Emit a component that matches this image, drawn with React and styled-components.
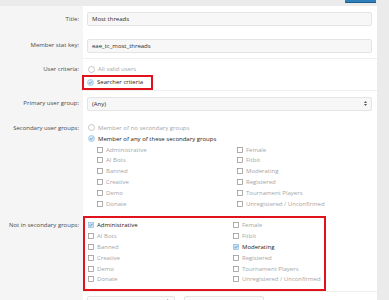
import React from "react";
import styled, { createGlobalStyle, css } from "styled-components";

const GlobalStyle = createGlobalStyle`
  html, body {
    margin: 0;
    padding: 0;
    background: #ebebeb;
    font-family: "Open Sans", "Noto Sans", sans-serif;
    font-size: 6px;
    overflow: hidden;
  }
`;

const Page = styled.div`
  width: 377px;
  height: 300px;
  overflow: hidden;
`;

const TopBar = styled.div`
  height: 6px;
  display: flex;
  justify-content: flex-end;
  align-items: flex-start;
`;

const TopButton = styled.div`
  width: 31px;
  height: 2px;
  background: #2f7fba;
  border-bottom: 1px solid #1d5f91;
  margin-right: 1px;
`;

const Card = styled.div`
  background: #fff;
  display: flex;
  flex-direction: column;
`;

const Row = styled.div`
  display: grid;
  grid-template-columns: 83px 1fr;
`;

const Label = styled.div`
  background: #f5f5f5;
  color: #4a4a4a;
  text-align: right;
  padding-right: 4px;
  line-height: 10.8px;
  display: flex;
  justify-content: flex-end;
  align-items: ${(p) => (p.$top ? "flex-start" : "center")};
  padding-top: ${(p) => p.$pt || 0}px;
`;

const Content = styled.div`
  padding: ${(p) => p.$pad || "6px 5px 6px 4px"};
  ${(p) =>
    p.$sep &&
    css`
      border-top: 1px solid #eeeeee;
    `}
  ${(p) =>
    p.$sepBottom &&
    css`
      border-bottom: 1px solid #eeeeee;
    `}
`;

const Input = styled.div`
  height: 14px;
  box-sizing: border-box;
  background: #f7f7f7;
  border: 1px solid #e4e4e4;
  border-radius: 2px;
  color: #2b2b2b;
  display: flex;
  align-items: center;
  justify-content: space-between;
  padding: 0 4px;
`;

const Arrows = styled.svg`
  width: 3px;
  height: 5px;
`;

const Option = styled.div`
  display: flex;
  align-items: center;
  height: 10.8px;
  color: ${(p) => (p.$on ? "#222" : "#a6a6a6")};
  gap: 3px;
`;

const Highlight = styled.div`
  border: 2px solid #e0121b;
  margin-left: ${(p) => p.$ml || -6}px;
  padding: ${(p) => p.$pad || "0 3px"};
  width: ${(p) => p.$w}px;
  box-sizing: border-box;
`;

const CheckGrid = styled.div`
  display: grid;
  grid-template-columns: ${(p) => p.$col}px 1fr;
  grid-auto-flow: column;
  grid-template-rows: repeat(6, 10.8px);
  margin-left: ${(p) => p.$ml || 0}px;
`;

const Footer = styled.div`
  display: flex;
  gap: 9px;
  padding-top: 4px;
`;

const SmallBox = styled.div`
  width: ${(p) => p.$w}px;
  height: 12px;
  border: 1px solid #e4e4e4;
  border-radius: 2px;
  background: #fafafa;
  box-sizing: border-box;
  display: flex;
  justify-content: flex-end;
  align-items: center;
  padding-right: 5px;
`;

function Radio({ on }) {
  return (
    <svg width="7" height="7" viewBox="0 0 7 7">
      <circle
        cx="3.5"
        cy="3.5"
        r="3"
        fill={on ? "#d7e8f6" : "#fff"}
        stroke={on ? "#9cc4e4" : "#b8b8b8"}
        strokeWidth="0.8"
      />
      {on && (
        <path d="M2 3.6 L3.1 4.6 L5 2.5" fill="none" stroke="#3f88c5" strokeWidth="0.8" />
      )}
    </svg>
  );
}

function Box({ on }) {
  return (
    <svg width="6" height="6" viewBox="0 0 6 6">
      <rect
        x="0.5"
        y="0.5"
        width="5"
        height="5"
        fill={on ? "#cfe3f4" : "#fff"}
        stroke={on ? "#8fbde3" : "#8a8a8a"}
        strokeWidth="0.7"
      />
      {on && (
        <path d="M1.4 3 L2.5 4.1 L4.6 1.8" fill="none" stroke="#3b82c1" strokeWidth="0.8" />
      )}
    </svg>
  );
}

const groups = [
  "Administrative",
  "AI Bots",
  "Banned",
  "Creative",
  "Demo",
  "Donate",
  "Female",
  "Fitbit",
  "Moderating",
  "Registered",
  "Tournament Players",
  "Unregistered / Unconfirmed",
];

export default function App() {
  const excluded = ["Administrative", "Moderating"];
  return (
    <Page>
      <GlobalStyle />
      <TopBar>
        <TopButton />
      </TopBar>
      <Card>
        <Row>
          <Label>Title:</Label>
          <Content $pad="6px 5px 6px 4px">
            <Input>Most threads</Input>
          </Content>
        </Row>
        <Row>
          <Label>Member stat key:</Label>
          <Content $pad="7px 5px 5px 4px">
            <Input>eae_tc_most_threads</Input>
          </Content>
        </Row>
        <Row>
          <Label $top $pt={6}>User criteria:</Label>
          <Content $sep $pad="5px 5px 0 5px">
            <Option>
              <Radio />
              All valid users
            </Option>
            <Highlight $w={71} $pad="0 0 0 3px">
              <Option $on>
                <Radio on />
                Searcher criteria
              </Option>
            </Highlight>
          </Content>
        </Row>
        <Row>
          <Label>Primary user group:</Label>
          <Content $sep $pad="6px 5px 6px 4px">
            <Input>
              (Any)
              <Arrows viewBox="0 0 3 5">
                <path d="M0 2 L1.5 0 L3 2 Z M0 3 L1.5 5 L3 3 Z" fill="#555" />
              </Arrows>
            </Input>
          </Content>
        </Row>
        <Row>
          <Label $top $pt={6}>Secondary user groups:</Label>
          <Content $pad="6px 5px 3px 5px">
            <Option>
              <Radio />
              Member of no secondary groups
            </Option>
            <Option $on>
              <Radio on />
              Member of any of these secondary groups
            </Option>
            <CheckGrid $col={140} $ml={9}>
              {groups.map((g) => (
                <Option key={g}>
                  <Box />
                  {g}
                </Option>
              ))}
            </CheckGrid>
          </Content>
        </Row>
        <Row>
          <Label $top $pt={8}>Not in secondary groups:</Label>
          <Content $pad="4px 5px 0 5px" $sepBottom>
            <Highlight $w={243} $pad="2px 0 4px 3px" $ml={-5}>
              <CheckGrid $col={145}>
                {groups.map((g) => {
                  const on = excluded.includes(g);
                  return (
                    <Option key={g} $on={on}>
                      <Box on={on} />
                      {g}
                    </Option>
                  );
                })}
              </CheckGrid>
            </Highlight>
          </Content>
        </Row>
        <Row>
          <Label />
          <Content $pad="0 5px 0 4px">
            <Footer>
              <SmallBox $w={88}>
                <Arrows viewBox="0 0 3 5">
                  <path d="M0 2 L1.5 0 L3 2 Z M0 3 L1.5 5 L3 3 Z" fill="#999" />
                </Arrows>
              </SmallBox>
              <SmallBox $w={80} />
            </Footer>
          </Content>
        </Row>
      </Card>
    </Page>
  );
}
